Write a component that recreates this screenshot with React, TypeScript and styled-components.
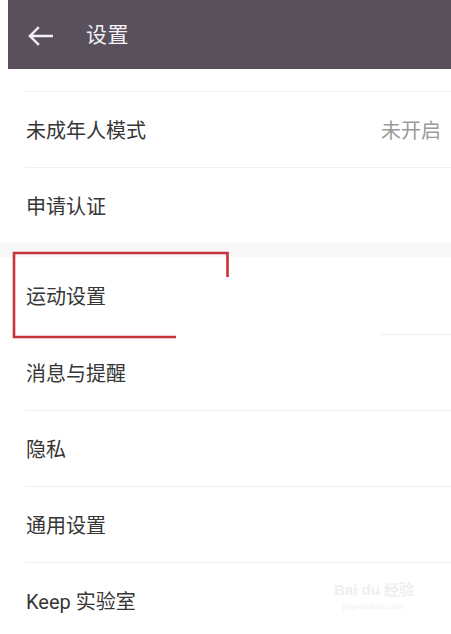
import React from "react"
import styled, { createGlobalStyle } from "styled-components"

const GlobalStyle = createGlobalStyle`
  html, body {
    margin: 0;
    padding: 0;
    background: #ffffff;
  }
  body {
    font-family: Roboto, "Noto Sans CJK SC", sans-serif;
  }
`

const Screen = styled.div`
  position: relative;
  width: 451px;
  height: 634px;
  overflow: hidden;
  background: #ffffff;
`

const TitleBar = styled.div`
  display: flex;
  align-items: center;
  height: 69px;
  margin-left: 8px;
  padding: 2px 0 0 19px;
  box-sizing: border-box;
  gap: 33px;
  background: #594f5d;
  color: #f4f2f5;
`

const BackArrow = styled.svg`
  width: 26px;
  height: 20px;
  flex-shrink: 0;
`

const Title = styled.div`
  font-size: 21px;
  line-height: 1;
  letter-spacing: 0.5px;
`

const Row = styled.div<{ $h: number; $rule?: "full" | "partial" | "none" }>`
  position: relative;
  display: flex;
  align-items: center;
  justify-content: space-between;
  box-sizing: border-box;
  height: ${p => p.$h}px;
  margin-left: 25px;
  padding: 2px 10px 0 1px;
  border-bottom: ${p => (p.$rule === "full" ? "1px solid #efefef" : "none")};

  &::after {
    content: "";
    display: ${p => (p.$rule === "partial" ? "block" : "none")};
    position: absolute;
    left: 355px;
    right: 0;
    bottom: 0;
    height: 1px;
    background: #efefef;
  }
`

const Label = styled.span`
  font-size: 20px;
  color: #363636;
  line-height: 1;
`

const Value = styled.span`
  font-size: 20px;
  color: #9a9a9a;
  line-height: 1;
`

const GroupGap = styled.div`
  height: 14px;
  background: #f7f7f8;
`

const Highlight = styled.svg`
  position: absolute;
  left: 0;
  top: 0;
  width: 451px;
  height: 634px;
  pointer-events: none;
`

const Watermark = styled.div`
  position: absolute;
  left: 334px;
  top: 582px;
  display: flex;
  flex-direction: column;
  align-items: center;
  color: #efefef;
  font-family: "Liberation Sans", "Noto Sans CJK SC", sans-serif;
  pointer-events: none;
`

const MarkTop = styled.div`
  font-size: 15px;
  font-weight: 700;
  line-height: 1;
`

const MarkUrl = styled.div`
  font-size: 7px;
  line-height: 1;
  margin-top: 6px;
  letter-spacing: 0.4px;
`

const items = [
  { label: "消息与提醒", h: 76 },
  { label: "隐私", h: 76 },
  { label: "通用设置", h: 76 },
  { label: "Keep 实验室", h: 76, last: true },
]

export default function App() {
  return (
    <Screen>
      <GlobalStyle />
      <TitleBar>
        <BackArrow viewBox="0 0 26 20">
          <path
            d="M25 10H3M11 2L3 10l8 8"
            fill="none"
            stroke="#f4f2f5"
            strokeWidth="2.4"
            strokeLinecap="square"
          />
        </BackArrow>
        <Title>设置</Title>
      </TitleBar>

      <Row $h={23} $rule="full" />
      <Row $h={76} $rule="full">
        <Label>未成年人模式</Label>
        <Value>未开启</Value>
      </Row>
      <Row $h={75} $rule="none">
        <Label>申请认证</Label>
      </Row>

      <GroupGap />

      <Row $h={78} $rule="partial">
        <Label>运动设置</Label>
      </Row>
      {items.map(it => (
        <Row key={it.label} $h={it.h} $rule={it.last ? "none" : "full"}>
          <Label>{it.label}</Label>
        </Row>
      ))}

      <Highlight viewBox="0 0 451 634">
        <polyline
          points="227.5,277 227.5,253 14,253 14,337 176,337"
          fill="none"
          stroke="#c8323b"
          strokeWidth="2.6"
        />
      </Highlight>

      <Watermark>
        <MarkTop>Bai du 经验</MarkTop>
        <MarkUrl>jingyan.baidu.com</MarkUrl>
      </Watermark>
    </Screen>
  )
}
